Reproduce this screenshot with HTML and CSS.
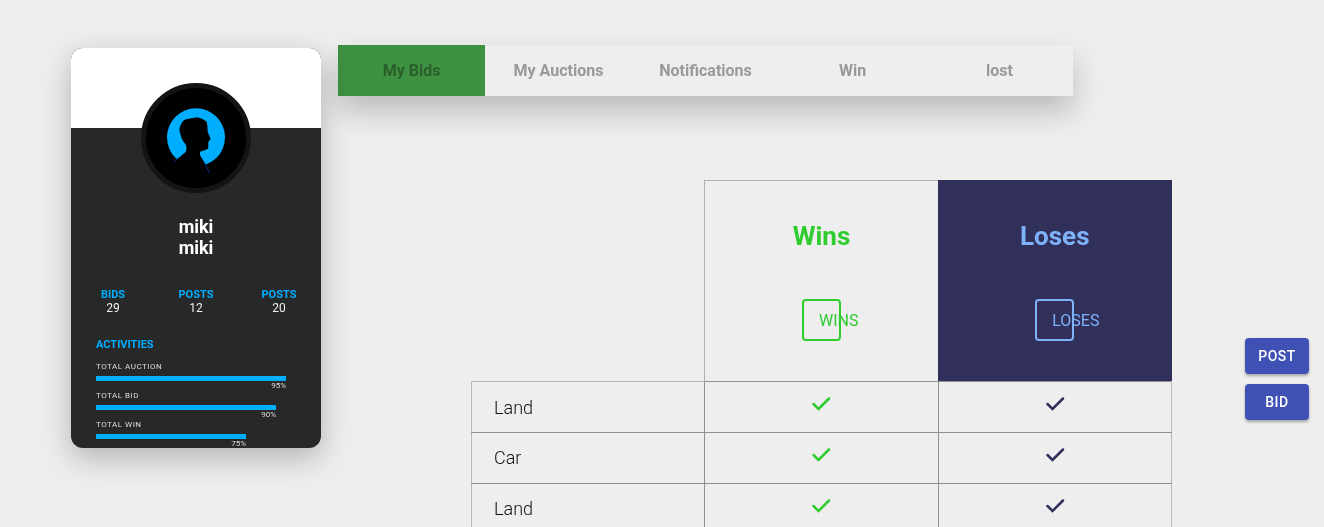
FILE: index.html
```html
<!DOCTYPE html>
<html lang="en">
<head>
    <meta charset="UTF-8">
    <meta name="viewport" content="width=device-width, initial-scale=1.0">
    <title>Auction Profile</title>
    <link rel="stylesheet" href="styles.css">
</head>
<body>
    <div class="page">
        <aside class="card">
            <div class="card-top"></div>
            <div class="avatar">
                <svg width="100" height="100" viewBox="5 5 100 100">
                    <circle cx="55" cy="54.3" r="29" fill="#00aeff"/>
                    <path d="M32.3 79.3L45 68.7C45.5 66 45.5 64 45 62C42 58 40 55 39.7 52C38.5 49 38 46 39 43.7C40.5 39.5 42 37.5 45 36.3C49 35.5 52 35 56.3 34.3C60 35 63 36.5 65.7 38.7C66.5 42 66.5 45 66.7 48.7L69.7 56.3L67.3 58.7V65.3C65 67 62 68 59 68.7V72L63 78.7L68.3 90.3V105H32.3Z" fill="#000"/>
                    <path d="M32.5 79.5L37 75M63.5 79L68.5 90" stroke="#0b3c9c" stroke-width="0.8" fill="none"/>
                </svg>
            </div>
            <div class="card-body">
                <h2 class="name">miki<br>miki</h2>
                <div class="stats">
                    <div class="stat"><span class="stat-label">BIDS</span><span class="stat-value">29</span></div>
                    <div class="stat"><span class="stat-label">POSTS</span><span class="stat-value">12</span></div>
                    <div class="stat"><span class="stat-label">POSTS</span><span class="stat-value">20</span></div>
                </div>
                <h3 class="activities">ACTIVITIES</h3>
                <div class="activity">
                    <div class="activity-label">TOTAL AUCTION</div>
                    <div class="bar" style="width: 190px"></div>
                    <div class="percent" style="width: 190px">95%</div>
                </div>
                <div class="activity">
                    <div class="activity-label">TOTAL BID</div>
                    <div class="bar" style="width: 180px"></div>
                    <div class="percent" style="width: 180px">90%</div>
                </div>
                <div class="activity">
                    <div class="activity-label">TOTAL WIN</div>
                    <div class="bar" style="width: 150px"></div>
                    <div class="percent" style="width: 150px">75%</div>
                </div>
            </div>
        </aside>

        <main class="content">
            <nav class="tabs">
                <a class="tab active">My Bids</a>
                <a class="tab">My Auctions</a>
                <a class="tab">Notifications</a>
                <a class="tab">Win</a>
                <a class="tab">lost</a>
            </nav>

            <table class="plans">
                <thead>
                    <tr>
                        <th class="blank"></th>
                        <th class="wins">
                            <div class="plan-title">Wins</div>
                            <span class="plan-box">WINS</span>
                        </th>
                        <th class="loses">
                            <div class="plan-title">Loses</div>
                            <span class="plan-box">LOSES</span>
                        </th>
                    </tr>
                </thead>
                <tbody>
                    <tr>
                        <td class="item">Land</td>
                        <td class="check"><svg width="20" height="16" viewBox="0 0 20 16"><path d="M2.500 8L7.500 13L18 2.500" fill="none" stroke="#2ecc2e" stroke-width="2.500" stroke-linecap="round"/></svg></td>
                        <td class="check"><svg width="20" height="16" viewBox="0 0 20 16"><path d="M2.500 8L7.500 13L18 2.500" fill="none" stroke="#31305b" stroke-width="2.500" stroke-linecap="round"/></svg></td>
                    </tr>
                    <tr>
                        <td class="item">Car</td>
                        <td class="check"><svg width="20" height="16" viewBox="0 0 20 16"><path d="M2.500 8L7.500 13L18 2.500" fill="none" stroke="#2ecc2e" stroke-width="2.500" stroke-linecap="round"/></svg></td>
                        <td class="check"><svg width="20" height="16" viewBox="0 0 20 16"><path d="M2.500 8L7.500 13L18 2.500" fill="none" stroke="#31305b" stroke-width="2.500" stroke-linecap="round"/></svg></td>
                    </tr>
                    <tr>
                        <td class="item">Land</td>
                        <td class="check"><svg width="20" height="16" viewBox="0 0 20 16"><path d="M2.500 8L7.500 13L18 2.500" fill="none" stroke="#2ecc2e" stroke-width="2.500" stroke-linecap="round"/></svg></td>
                        <td class="check"><svg width="20" height="16" viewBox="0 0 20 16"><path d="M2.500 8L7.500 13L18 2.500" fill="none" stroke="#31305b" stroke-width="2.500" stroke-linecap="round"/></svg></td>
                    </tr>
                </tbody>
            </table>
        </main>
    </div>

    <div class="actions">
        <button class="action">POST</button>
        <button class="action">BID</button>
    </div>
</body>
</html>
```

FILE: styles.css
```css
* {
    box-sizing: border-box;
}
html, body {
    height: 100%;
}
body {
    font-family: Roboto, sans-serif;
    margin: 0;
    background-color: #eeeeee;
    overflow: hidden;
}
.page {
    display: flex;
    align-items: flex-start;
    padding-left: 71px;
    height: 527px;
    overflow: hidden;
    will-change: transform;
}

/* profile card */
.card {
    position: relative;
    flex: none;
    width: 250px;
    height: 400px;
    margin-top: 48px;
    border-radius: 12px;
    background: #272828;
    box-shadow: 0 10px 30px rgba(0, 0, 0, 0.25);
    overflow: hidden;
}
.card-top {
    height: 80px;
    background: #fff;
}
.avatar {
    position: absolute;
    top: 35px;
    left: 70px;
    width: 110px;
    height: 110px;
    border: 5px solid #141414;
    border-radius: 50%;
    background: #000;
    overflow: hidden;
}
.avatar svg {
    display: block;
}
.card-body {
    padding-top: 88px;
}
.name {
    margin: 0;
    color: #fff;
    font-size: 18px;
    line-height: 21px;
    font-weight: 700;
    text-align: center;
}
.stats {
    display: grid;
    grid-template-columns: repeat(3, 83px);
    margin-top: 31px;
    padding-left: 0.5px;
}
.stat {
    display: flex;
    flex-direction: column;
    align-items: center;
}
.stat-label {
    color: #00aeff;
    font-size: 11px;
    line-height: 12px;
    font-weight: 700;
}
.stat-value {
    color: #eee;
    font-size: 12px;
    line-height: 14px;
}
.activities {
    margin: 23px 0 10px 25px;
    color: #00aeff;
    font-size: 11px;
    line-height: 14px;
    font-weight: 700;
}
.activity {
    height: 29px;
    padding-left: 25px;
    color: #ddd;
    font-size: 8px;
}
.activity-label {
    line-height: 10px;
    letter-spacing: 0.5px;
}
.bar {
    height: 5px;
    margin-top: 4px;
    background: #00aeff;
}
.percent {
    line-height: 9px;
    text-align: right;
}

/* tabs */
.content {
    flex: none;
    margin-left: 17px;
    padding-top: 45px;
}
.tabs {
    display: flex;
    width: 735px;
    height: 51px;
    background: #eeeeee;
    box-shadow: 0 15px 30px rgba(0, 0, 0, 0.22);
}
.tab {
    flex: 1;
    color: #999;
    font-size: 16px;
    font-weight: 700;
    line-height: 51px;
    text-align: center;
}
.tab.active {
    background: #3d9140;
    color: #2a5f2d;
}

/* plans table */
.plans {
    width: 701px;
    margin: 84px 0 0 133px;
    border-collapse: collapse;
    table-layout: fixed;
}
.plans th {
    height: 201px;
    padding: 0;
    vertical-align: top;
    font-weight: 400;
}
.plans .blank {
    width: 233px;
}
.plans .wins {
    border-top: 1px solid #b0b0b0;
    border-left: 1px solid #b0b0b0;
    color: #2ecc2e;
}
.plans .loses {
    border-top: 1px solid #31305b;
    background: #31305b;
    color: #7eb3fb;
}
.plan-title {
    margin-top: 38px;
    font-size: 26px;
    line-height: 34px;
    font-weight: 700;
}
.plan-box {
    display: inline-block;
    width: 39px;
    height: 42px;
    margin-top: 46px;
    padding-left: 15px;
    border: 2px solid currentColor;
    border-radius: 4px;
    font-size: 16px;
    font-weight: 400;
    line-height: 40px;
    text-align: left;
    white-space: nowrap;
}
.plans td {
    height: 51px;
    border: 1px solid #8f8f8f;
    padding: 0;
}
.plans td:first-child {
    border-left-color: #b8b8b8;
}
.plans td:last-child {
    border-right-color: #b8b8b8;
}
.plans tbody tr:first-child .item {
    border-top-color: #b8b8b8;
}
.plans .item {
    padding-left: 22px;
    color: #111;
    font-size: 18px;
    font-weight: 300;
}
.plans tbody tr + tr .item {
    padding-bottom: 2px;
}
.plans .check {
    text-align: center;
    vertical-align: top;
    padding-top: 14px;
}
.check svg {
    display: inline-block;
}

/* floating buttons */
.actions {
    position: fixed;
    top: 338px;
    left: 1245px;
    display: flex;
    flex-direction: column;
    gap: 10px;
    will-change: transform;
}
.action {
    width: 64px;
    height: 36px;
    border: none;
    border-radius: 4px;
    background: #3f51b5;
    color: #fff;
    font-family: Roboto, sans-serif;
    font-size: 14px;
    font-weight: 500;
    letter-spacing: 0.5px;
    box-shadow: 0 2px 3px rgba(0, 0, 0, 0.3);
}
```
